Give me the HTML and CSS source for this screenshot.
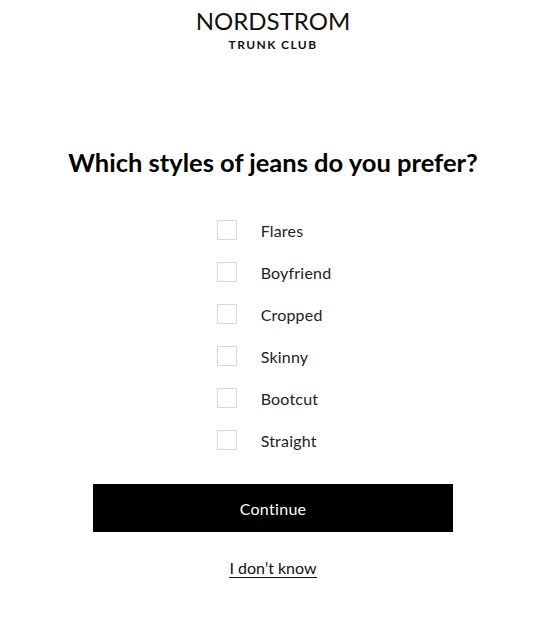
FILE: index.html
```html
<!DOCTYPE html>
<html>
<head>
<meta charset="utf-8">
<link rel="stylesheet" href="styles.css">
</head>
<body>
<div class="page">
  <header class="logo">
    <div class="brand">NORDSTROM</div>
    <div class="sub">TRUNK CLUB</div>
  </header>
  <h1 class="title">Which styles of jeans do you prefer?</h1>
  <div class="options">
    <label class="opt"><span class="box"></span><span class="lbl">Flares</span></label>
    <label class="opt"><span class="box"></span><span class="lbl">Boyfriend</span></label>
    <label class="opt"><span class="box"></span><span class="lbl">Cropped</span></label>
    <label class="opt"><span class="box"></span><span class="lbl">Skinny</span></label>
    <label class="opt"><span class="box"></span><span class="lbl">Bootcut</span></label>
    <label class="opt"><span class="box"></span><span class="lbl">Straight</span></label>
  </div>
  <button class="continue">Continue</button>
  <a class="idk" href="#">I don’t know</a>
</div>
</body>
</html>
```

FILE: styles.css
```css
html, body {
  margin: 0;
  padding: 0;
  background: #fff;
}
body {
  font-family: Lato, "Open Sans", sans-serif;
  color: #111;
}
.page {
  padding-left: 10px;
  display: flex;
  flex-direction: column;
  align-items: center;
}
.logo {
  display: flex;
  flex-direction: column;
  align-items: center;
  padding-top: 8px;
}
.brand {
  font-family: Lato, sans-serif;
  font-weight: 400;
  font-size: 24px;
  line-height: 26px;
  letter-spacing: 0;
  color: #111;
}
.sub {
  font-weight: 700;
  font-size: 12px;
  line-height: 14px;
  letter-spacing: 1.4px;
  margin-top: 4px;
}
.title {
  margin: 95px 0 0;
  font-size: 25.5px;
  line-height: 30px;
  font-weight: 700;
  color: #000;
}
.options {
  margin-top: 43px;
  padding-left: 2px;
  display: flex;
  flex-direction: column;
  gap: 22px;
  align-items: flex-start;
}
.opt {
  display: flex;
  align-items: center;
  height: 20px;
}
.box {
  width: 18px;
  height: 18px;
  border: 1px solid #d9d9d9;
  margin-right: 24px;
}
.lbl {
  font-size: 16px;
  color: #222;
  letter-spacing: 0.2px;
}
.continue {
  margin-top: 34px;
  width: 360px;
  height: 48px;
  background: #000;
  color: #fff;
  border: 0;
  font-family: Lato, sans-serif;
  font-size: 16px;
  letter-spacing: 0.3px;
}
.idk {
  margin-top: 27px;
  font-size: 16px;
  color: #111;
  text-decoration: none;
  border-bottom: 1px solid #111;
  line-height: 18px;
  letter-spacing: 0;
}
```
